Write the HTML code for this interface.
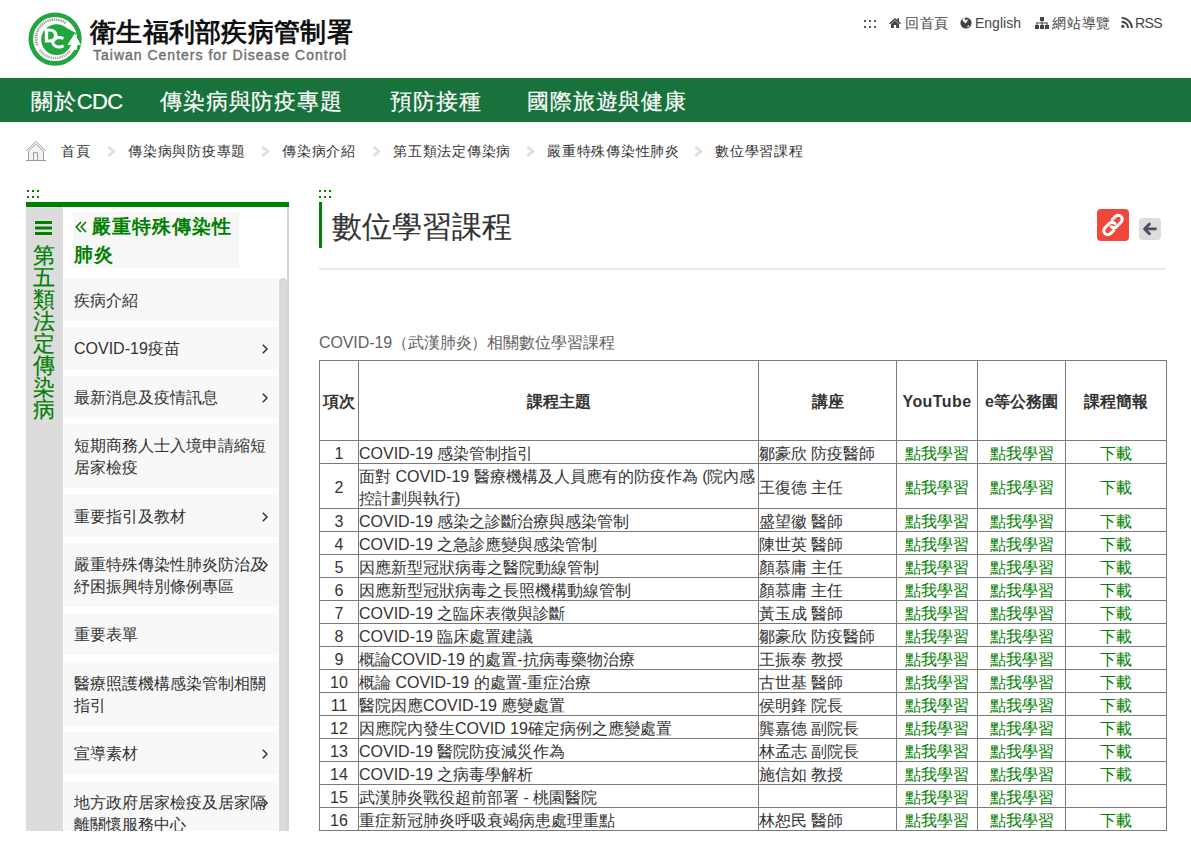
<!DOCTYPE html>
<html lang="zh-Hant-TW">
<head>
<meta charset="utf-8">
<title>數位學習課程</title>
<style>
*{box-sizing:border-box;margin:0;padding:0}
html,body{width:1191px;height:846px;overflow:hidden;background:#fff}
body{font-family:"Liberation Sans",sans-serif;color:#333;position:relative}
.abs{position:absolute}
/* header */
#logo{left:28px;top:12px;width:54px;height:54px}
#sitename{left:90px;top:15px;font-size:26px;font-weight:bold;color:#111;line-height:34px;white-space:nowrap;letter-spacing:0.3px;}
#siteen{left:93px;top:46px;font-size:14px;color:#707070;line-height:18px;white-space:nowrap;letter-spacing:1.0px;-webkit-text-stroke:0.4px #707070}
#toplinks{top:14px;left:0;width:1191px;height:18px;font-size:14px;color:#444;line-height:18px;white-space:nowrap}
#toplinks span{position:absolute;top:0}
#toplinks svg{position:absolute}
/* nav */
#nav{left:0;top:78px;width:1191px;height:44px;background:#18723c}
#nav span{position:absolute;top:2px;line-height:44px;color:#fff;font-size:22px;letter-spacing:0.85px;white-space:nowrap;-webkit-text-stroke:0.2px #fff}
/* breadcrumb */
#bc{left:0;top:140px;height:22px;width:1191px;font-size:14px;line-height:22px;color:#333;letter-spacing:0.75px}
#bc span{position:absolute;top:0;white-space:nowrap}
#bc i{position:absolute;top:5px;width:8px;height:12px}
/* dots */
.dots{width:12px;height:8px}
/* sidebar */
#side{left:26px;top:202px;width:263px;height:629px;border-top:5px solid #008000;overflow:hidden}
#sidecol{left:0;top:0;width:37px;height:629px;background:#dcdcdc}
#sidecol .ham{position:absolute;left:9px;top:14px;width:17px;height:14px}
#sidecol .vt{position:absolute;left:7px;top:38px;width:22px;font-size:22px;line-height:22px;color:#008000;-webkit-text-stroke:0.2px #008000;text-align:center}
#sidetitle{left:47px;top:5px;width:166px;height:56px;background:#f7f7f7;color:#008000;font-size:19px;font-weight:bold;line-height:28px;padding-left:1px;letter-spacing:1px;padding-top:1px}
#sidelist{left:38px;top:72px;width:214px}
#sidelist div{position:relative;background:#f8f8f8;margin-bottom:6.4px;padding:11px 10px 9px 10px;font-size:16px;line-height:22px;color:#333}
#sidelist div b{position:absolute;right:10px;top:17px;margin-top:0;width:6px;height:10px;font-weight:normal;line-height:0}
#sbtrack{left:261px;top:0;width:2px;height:629px;background:#d4d4d4}
#sbthumb{left:253px;top:71px;width:8px;height:560px;background:#d9d9d9;border-radius:4px 4px 0 0}
/* main */
#title{left:332px;top:203.5px;font-size:30px;line-height:46px;color:#333;-webkit-text-stroke:0.15px #333;white-space:nowrap}
#tbar{left:319px;top:202px;width:3px;height:46px;background:#008000}
#hr{left:319px;top:268px;width:847px;height:2px;background:#e9e9e9}
#icolink{left:1097px;top:209px;width:32px;height:32px;background:#f0473a;border-radius:4px}
#icoback{left:1139px;top:218px;width:22px;height:22px;background:#dcdcdc;border-radius:4px}
#caption{left:319px;top:331px;font-size:16px;line-height:24px;color:#626262;letter-spacing:-0.1px;white-space:nowrap}
table{position:absolute;left:319px;top:360px;border-collapse:collapse;font-size:16px;line-height:22px;color:#333}
td,th{border:1px solid #7a7a7a;padding:0;vertical-align:middle}
th{height:80px;font-weight:bold;text-align:center}
td.c{text-align:center}
td a{color:#008000;text-decoration:none}
.t{position:relative;top:2px}
.h{position:relative;top:1.5px}
</style>
</head>
<body>

<!-- logo -->
<svg id="logo" class="abs" viewBox="0 0 54 54">
  <circle cx="27.1" cy="27.1" r="24.3" fill="none" stroke="#22a63f" stroke-width="4.6"/>
  <path d="M9.5 33 A18.5 18.5 0 0 1 38 11.5" fill="none" stroke="#7a7a7a" stroke-width="2.6" stroke-dasharray="1.3 0.9" opacity="0.75"/>
  <path d="M12 38 A18.5 18.5 0 0 0 42.5 38" fill="none" stroke="#7a7a7a" stroke-width="2.4" stroke-dasharray="1.2 1" opacity="0.7"/>
  <circle cx="28.6" cy="27.6" r="15.4" fill="#22a63f"/>
  <path d="M36 14.8 L48 21 L46 33 L40 33 Z" fill="#22a63f"/>
  <path d="M39.5 33 L46.6 21.6 L53 33 L49.6 33 L48.6 38 L43 38 L43.6 33 Z" fill="#fff"/>
  <path d="M16.8 16.6 H20.8 C26.4 16.6 29.6 19.6 29.6 23.6 C29.6 27.6 26.4 30.6 20.8 30.6 H16.8 Z M20.2 19.6 V27.6 H21 C24.2 27.6 26 26.2 26 23.6 C26 21 24.2 19.6 21 19.6 Z" fill="#fff"/>
  <path d="M35.4 26.6 A6.6 4.6 0 1 0 35.6 33.8" fill="none" stroke="#fff" stroke-width="3"/>
</svg>
<div id="sitename" class="abs">衛生福利部疾病管制署</div>
<div id="siteen" class="abs">Taiwan Centers for Disease Control</div>

<div id="toplinks" class="abs">
  <svg style="left:864px;top:6px" width="12" height="8" viewBox="0 0 12 8"><g fill="#555"><rect x="0" y="0" width="2" height="2"/><rect x="5" y="0" width="2" height="2"/><rect x="10" y="0" width="2" height="2"/><rect x="0" y="6" width="2" height="2"/><rect x="5" y="6" width="2" height="2"/><rect x="10" y="6" width="2" height="2"/></g></svg>
  <svg style="left:889px;top:4px" width="12" height="10" viewBox="0 0 12 10"><path fill="#444" d="M6 0 L0 5.2 L1 6.2 L6 1.9 L11 6.2 L12 5.2 L10 3.4 V0.3 H8.3 V2 Z M2 6 V10 H4.9 V7 H7.1 V10 H10 V6 L6 2.6 Z"/></svg>
  <span style="left:905px;letter-spacing:0.5px">回首頁</span>
  <svg style="left:960px;top:3px" width="12" height="12" viewBox="0 0 12 12"><circle cx="6" cy="6" r="5.6" fill="#444"/><path fill="#fff" d="M2.2 2.6 C3 1.6 4.2 1.2 5.2 1.3 L5.6 2.2 L4.6 2.6 L5.2 3.4 L6.6 2.8 L8.3 2.4 C7.8 3.6 7 4.6 6.4 5.2 L5.8 6.4 L3.4 4.4 Z M7.3 9.3 L8.6 8.2 L9.4 9 C8.8 9.8 8.2 10.2 7.6 10.4 Z"/></svg>
  <span style="left:975px">English</span>
  <svg style="left:1035px;top:3px" width="14" height="12" viewBox="0 0 14 12"><g fill="#444"><rect x="5" y="0" width="4" height="4"/><rect x="0" y="8" width="4" height="4"/><rect x="5" y="8" width="4" height="4"/><rect x="10" y="8" width="4" height="4"/><rect x="6.5" y="4" width="1" height="4"/><rect x="1.5" y="5.5" width="11" height="1"/><rect x="1.5" y="5.5" width="1" height="2.5"/><rect x="11.5" y="5.5" width="1" height="2.5"/></g></svg>
  <span style="left:1052px;letter-spacing:0.8px">網站導覽</span>
  <svg style="left:1121px;top:3px" width="12" height="11" viewBox="0 0 12 11"><g fill="none" stroke="#444" stroke-width="1.9"><path d="M0.6 0.9 A10.2 10.2 0 0 1 10.9 11"/><path d="M0.6 4.7 A6.4 6.4 0 0 1 7.1 11"/></g><circle cx="1.8" cy="9.3" r="1.6" fill="#444"/></svg>
  <span style="left:1135px;letter-spacing:-0.6px">RSS</span>
</div>

<div id="nav" class="abs">
  <span style="left:31px">關於<span style="position:static;letter-spacing:-0.6px">CDC</span></span>
  <span style="left:160px">傳染病與防疫專題</span>
  <span style="left:390px">預防接種</span>
  <span style="left:527px">國際旅遊與健康</span>
</div>

<div id="bc" class="abs">
  <svg class="abs" style="left:26px;top:1px" width="20" height="21" viewBox="0 0 20 21"><path d="M2.5 9.8 L9.7 2.9 L17.3 9.8 V19.5 H2.5 Z" fill="#f2f2f2"/><g fill="none" stroke="#9a9a9a" stroke-width="1"><path d="M0.4 9.6 L9.7 0.5 L19.6 9.6"/><path d="M2.4 10 L9.7 3 L17.4 10"/><path d="M2.5 10 V19.5 M17.5 10 V19.5 M0 19.5 H20"/><path d="M7.5 19.5 V11.7 H11.6 V19.5"/></g></svg>
  <span style="left:61px">首頁</span>
  <svg class="abs" style="left:107px;top:6px" width="9" height="11" viewBox="0 0 9 11"><path d="M1.3 0.9 L7 5.4 L1.3 9.9" fill="none" stroke="#e0e0e0" stroke-width="2.8"/></svg>
  <svg class="abs" style="left:261px;top:6px" width="9" height="11" viewBox="0 0 9 11"><path d="M1.3 0.9 L7 5.4 L1.3 9.9" fill="none" stroke="#e0e0e0" stroke-width="2.8"/></svg>
  <svg class="abs" style="left:372px;top:6px" width="9" height="11" viewBox="0 0 9 11"><path d="M1.3 0.9 L7 5.4 L1.3 9.9" fill="none" stroke="#e0e0e0" stroke-width="2.8"/></svg>
  <svg class="abs" style="left:526px;top:6px" width="9" height="11" viewBox="0 0 9 11"><path d="M1.3 0.9 L7 5.4 L1.3 9.9" fill="none" stroke="#e0e0e0" stroke-width="2.8"/></svg>
  <svg class="abs" style="left:694px;top:6px" width="9" height="11" viewBox="0 0 9 11"><path d="M1.3 0.9 L7 5.4 L1.3 9.9" fill="none" stroke="#e0e0e0" stroke-width="2.8"/></svg>
  <span style="left:128px">傳染病與防疫專題</span>
  <span style="left:282px">傳染病介紹</span>
  <span style="left:393px">第五類法定傳染病</span>
  <span style="left:547px">嚴重特殊傳染性肺炎</span>
  <span style="left:715px">數位學習課程</span>
</div>

<svg class="abs" style="left:27px;top:190px" width="12" height="8" viewBox="0 0 12 8"><g fill="#008000"><rect x="0" y="0" width="2" height="2"/><rect x="5" y="0" width="2" height="2"/><rect x="10" y="0" width="2" height="2"/><rect x="0" y="6" width="2" height="2"/><rect x="5" y="6" width="2" height="2"/><rect x="10" y="6" width="2" height="2"/></g></svg>
<svg class="abs" style="left:319px;top:190px" width="12" height="8" viewBox="0 0 12 8"><g fill="#008000"><rect x="0" y="0" width="2" height="2"/><rect x="5" y="0" width="2" height="2"/><rect x="10" y="0" width="2" height="2"/><rect x="0" y="6" width="2" height="2"/><rect x="5" y="6" width="2" height="2"/><rect x="10" y="6" width="2" height="2"/></g></svg>
<div id="side" class="abs">
  <div id="sidecol" class="abs">
    <svg class="ham" width="17" height="14" viewBox="0 0 17 14"><g fill="#008000"><rect x="0" y="0" width="17" height="3"/><rect x="0" y="5.5" width="17" height="3"/><rect x="0" y="11" width="17" height="3"/></g></svg>
    <div class="vt">第五類法定傳染病</div>
  </div>
  <div id="sidetitle" class="abs"><svg width="17" height="12" viewBox="0 0 17 12" style="vertical-align:0px;margin-left:1px"><path d="M6 1 L1.2 6 L6 11 M11 1 L6.2 6 L11 11" fill="none" stroke="#008000" stroke-width="1.6"/></svg>嚴重特殊傳染性肺炎</div>
  <div id="sidelist" class="abs">
    <div>疾病介紹</div>
    <div>COVID-19疫苗<b><svg width="6" height="10" viewBox="0 0 6 10"><path d="M0.8 0.8 L5 5 L0.8 9.2" fill="none" stroke="#333" stroke-width="1.5"/></svg></b></div>
    <div>最新消息及疫情訊息<b><svg width="6" height="10" viewBox="0 0 6 10"><path d="M0.8 0.8 L5 5 L0.8 9.2" fill="none" stroke="#333" stroke-width="1.5"/></svg></b></div>
    <div>短期商務人士入境申請縮短居家檢疫</div>
    <div>重要指引及教材<b><svg width="6" height="10" viewBox="0 0 6 10"><path d="M0.8 0.8 L5 5 L0.8 9.2" fill="none" stroke="#333" stroke-width="1.5"/></svg></b></div>
    <div>嚴重特殊傳染性肺炎防治及紓困振興特別條例專區<b><svg width="6" height="10" viewBox="0 0 6 10"><path d="M0.8 0.8 L5 5 L0.8 9.2" fill="none" stroke="#333" stroke-width="1.5"/></svg></b></div>
    <div>重要表單</div>
    <div>醫療照護機構感染管制相關指引</div>
    <div>宣導素材<b><svg width="6" height="10" viewBox="0 0 6 10"><path d="M0.8 0.8 L5 5 L0.8 9.2" fill="none" stroke="#333" stroke-width="1.5"/></svg></b></div>
    <div>地方政府居家檢疫及居家隔離關懷服務中心<b><svg width="6" height="10" viewBox="0 0 6 10"><path d="M0.8 0.8 L5 5 L0.8 9.2" fill="none" stroke="#333" stroke-width="1.5"/></svg></b></div>
  </div>
  <div id="sbtrack" class="abs"></div>
  <div id="sbthumb" class="abs"></div>
</div>

<div id="tbar" class="abs"></div>
<div id="title" class="abs">數位學習課程</div>
<div id="icolink" class="abs"><svg width="32" height="32" viewBox="0 0 32 32"><g fill="none" stroke="#fff" stroke-width="3" stroke-linecap="round"><path d="M15.2 10.6 L18.6 7.4 C20.2 5.9 22.6 6 24.1 7.5 C25.6 9 25.7 11.4 24.2 13 L19.6 17.6 C18.1 19.1 15.7 19.1 14.2 17.6"/><path d="M16.8 21.4 L13.4 24.6 C11.8 26.1 9.4 26 7.9 24.5 C6.4 23 6.3 20.6 7.8 19 L12.4 14.4 C13.9 12.9 16.3 12.9 17.8 14.4"/></g></svg></div>
<div id="icoback" class="abs"><svg width="22" height="22" viewBox="0 0 22 22"><g fill="none" stroke="#4a5060" stroke-width="2.9" stroke-linecap="round" stroke-linejoin="round"><path d="M10.4 6 L5.6 10.9 L10.4 15.8"/><path d="M6.2 10.9 H16.4"/></g></svg></div>
<div id="hr" class="abs"></div>

<div id="caption" class="abs">COVID-19（武漢肺炎）相關數位學習課程</div>

<table>
<colgroup><col style="width:39px"><col style="width:400px"><col style="width:138px"><col style="width:81px"><col style="width:88px"><col style="width:101px"></colgroup>
<tr><th><span class="h">項次</span></th><th><span class="h">課程主題</span></th><th><span class="h">講座</span></th><th><span class="h" style="letter-spacing:0.4px">YouTube</span></th><th><span class="h">e等公務園</span></th><th><span class="h">課程簡報</span></th></tr>
<tr><td class="c"><span class="t">1</span></td><td><span class="t">COVID-19 感染管制指引</span></td><td><span class="t">鄒豪欣 防疫醫師</span></td><td class="c"><span class="t"><a>點我學習</a></span></td><td class="c"><span class="t"><a>點我學習</a></span></td><td class="c"><span class="t"><a>下載</a></span></td></tr>
<tr><td class="c"><span class="t">2</span></td><td><span class="t">面對 COVID-19 醫療機構及人員應有的防疫作為 (院內感控計劃與執行)</span></td><td><span class="t">王復德 主任</span></td><td class="c"><span class="t"><a>點我學習</a></span></td><td class="c"><span class="t"><a>點我學習</a></span></td><td class="c"><span class="t"><a>下載</a></span></td></tr>
<tr><td class="c"><span class="t">3</span></td><td><span class="t">COVID-19 感染之診斷治療與感染管制</span></td><td><span class="t">盛望徽 醫師</span></td><td class="c"><span class="t"><a>點我學習</a></span></td><td class="c"><span class="t"><a>點我學習</a></span></td><td class="c"><span class="t"><a>下載</a></span></td></tr>
<tr><td class="c"><span class="t">4</span></td><td><span class="t">COVID-19 之急診應變與感染管制</span></td><td><span class="t">陳世英 醫師</span></td><td class="c"><span class="t"><a>點我學習</a></span></td><td class="c"><span class="t"><a>點我學習</a></span></td><td class="c"><span class="t"><a>下載</a></span></td></tr>
<tr><td class="c"><span class="t">5</span></td><td><span class="t">因應新型冠狀病毒之醫院動線管制</span></td><td><span class="t">顏慕庸 主任</span></td><td class="c"><span class="t"><a>點我學習</a></span></td><td class="c"><span class="t"><a>點我學習</a></span></td><td class="c"><span class="t"><a>下載</a></span></td></tr>
<tr><td class="c"><span class="t">6</span></td><td><span class="t">因應新型冠狀病毒之長照機構動線管制</span></td><td><span class="t">顏慕庸 主任</span></td><td class="c"><span class="t"><a>點我學習</a></span></td><td class="c"><span class="t"><a>點我學習</a></span></td><td class="c"><span class="t"><a>下載</a></span></td></tr>
<tr><td class="c"><span class="t">7</span></td><td><span class="t">COVID-19 之臨床表徵與診斷</span></td><td><span class="t">黃玉成 醫師</span></td><td class="c"><span class="t"><a>點我學習</a></span></td><td class="c"><span class="t"><a>點我學習</a></span></td><td class="c"><span class="t"><a>下載</a></span></td></tr>
<tr><td class="c"><span class="t">8</span></td><td><span class="t">COVID-19 臨床處置建議</span></td><td><span class="t">鄒豪欣 防疫醫師</span></td><td class="c"><span class="t"><a>點我學習</a></span></td><td class="c"><span class="t"><a>點我學習</a></span></td><td class="c"><span class="t"><a>下載</a></span></td></tr>
<tr><td class="c"><span class="t">9</span></td><td><span class="t">概論COVID-19 的處置-抗病毒藥物治療</span></td><td><span class="t">王振泰 教授</span></td><td class="c"><span class="t"><a>點我學習</a></span></td><td class="c"><span class="t"><a>點我學習</a></span></td><td class="c"><span class="t"><a>下載</a></span></td></tr>
<tr><td class="c"><span class="t">10</span></td><td><span class="t">概論 COVID-19 的處置-重症治療</span></td><td><span class="t">古世基 醫師</span></td><td class="c"><span class="t"><a>點我學習</a></span></td><td class="c"><span class="t"><a>點我學習</a></span></td><td class="c"><span class="t"><a>下載</a></span></td></tr>
<tr><td class="c"><span class="t">11</span></td><td><span class="t">醫院因應COVID-19 應變處置</span></td><td><span class="t">侯明鋒 院長</span></td><td class="c"><span class="t"><a>點我學習</a></span></td><td class="c"><span class="t"><a>點我學習</a></span></td><td class="c"><span class="t"><a>下載</a></span></td></tr>
<tr><td class="c"><span class="t">12</span></td><td><span class="t">因應院內發生COVID 19確定病例之應變處置</span></td><td><span class="t">龔嘉德 副院長</span></td><td class="c"><span class="t"><a>點我學習</a></span></td><td class="c"><span class="t"><a>點我學習</a></span></td><td class="c"><span class="t"><a>下載</a></span></td></tr>
<tr><td class="c"><span class="t">13</span></td><td><span class="t">COVID-19 醫院防疫減災作為</span></td><td><span class="t">林孟志 副院長</span></td><td class="c"><span class="t"><a>點我學習</a></span></td><td class="c"><span class="t"><a>點我學習</a></span></td><td class="c"><span class="t"><a>下載</a></span></td></tr>
<tr><td class="c"><span class="t">14</span></td><td><span class="t">COVID-19 之病毒學解析</span></td><td><span class="t">施信如 教授</span></td><td class="c"><span class="t"><a>點我學習</a></span></td><td class="c"><span class="t"><a>點我學習</a></span></td><td class="c"><span class="t"><a>下載</a></span></td></tr>
<tr><td class="c"><span class="t">15</span></td><td><span class="t">武漢肺炎戰役超前部署 - 桃園醫院</span></td><td></td><td class="c"><span class="t"><a>點我學習</a></span></td><td class="c"><span class="t"><a>點我學習</a></span></td><td class="c"></td></tr>
<tr><td class="c"><span class="t">16</span></td><td><span class="t">重症新冠肺炎呼吸衰竭病患處理重點</span></td><td><span class="t">林恕民 醫師</span></td><td class="c"><span class="t"><a>點我學習</a></span></td><td class="c"><span class="t"><a>點我學習</a></span></td><td class="c"><span class="t"><a>下載</a></span></td></tr>
</table>

</body>
</html>
